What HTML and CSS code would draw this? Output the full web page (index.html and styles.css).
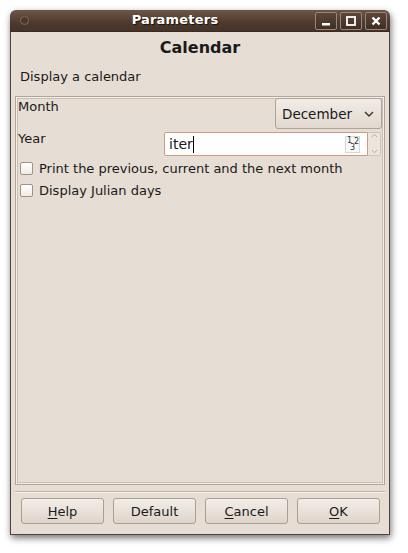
FILE: index.html
```html
<!DOCTYPE html>
<html>
<head>
<meta charset="utf-8">
<link rel="stylesheet" href="styles.css">
</head>
<body>
<div class="window">
  <div class="titlebar">
    <span class="dot"></span>
    <span class="title">Parameters</span>
    <div class="wbtns">
      <span class="wbtn"><svg width="12" height="12" viewBox="0 0 12 12"><rect x="2" y="8" width="8" height="2.5" fill="#fff"/></svg></span>
      <span class="wbtn"><svg width="12" height="12" viewBox="0 0 12 12"><rect x="2" y="2" width="8" height="8" fill="none" stroke="#fff" stroke-width="1.8"/></svg></span>
      <span class="wbtn"><svg width="12" height="12" viewBox="0 0 12 12"><path d="M2.5 2.5 L9.5 9.5 M9.5 2.5 L2.5 9.5" stroke="#fff" stroke-width="2.4"/></svg></span>
    </div>
  </div>
  <div class="body">
    <div class="heading">Calendar</div>
    <div class="desc">Display a calendar</div>
    <div class="frame">
      <div class="row">
        <span class="label">Month</span>
        <div class="combo"><span>December</span><svg width="12" height="8" viewBox="0 0 12 8"><path d="M2 2 L6 6 L10 2" fill="none" stroke="#3a3a3a" stroke-width="1.5"/></svg></div>
      </div>
      <div class="row">
        <span class="label year">Year</span>
        <div class="spin">
          <div class="entry"><span class="val">iter</span><span class="caret"></span><span class="numicon"><span class="n1">1</span><span class="n3">3</span><span class="n2">2</span></span></div>
          <div class="arrows">
            <svg width="9" height="12" viewBox="0 0 9 12"><path d="M1.5 4.5 L4.5 1.5 L7.5 4.5" fill="none" stroke="#a9a9a9" stroke-width="1"/></svg>
            <svg width="9" height="12" viewBox="0 0 9 12"><path d="M1.5 6.5 L4.5 9.5 L7.5 6.5" fill="none" stroke="#a9a9a9" stroke-width="1"/></svg>
          </div>
        </div>
      </div>
      <label class="check"><span class="box"></span>Print the previous, current and the next month</label>
      <label class="check"><span class="box"></span>Display Julian days</label>
    </div>
    <div class="sep"></div>
    <div class="buttons">
      <span class="btn"><u>H</u>elp</span>
      <span class="btn">Default</span>
      <span class="btn"><u>C</u>ancel</span>
      <span class="btn"><u>O</u>K</span>
    </div>
  </div>
</div>
</body>
</html>
```
FILE: styles.css
```css
html, body { margin: 0; padding: 0; background: #ffffff; }
body {
  font-family: "DejaVu Sans", "Liberation Sans", sans-serif;
  font-size: 13px;
  color: #1a1a1a;
  width: 408px;
  height: 553px;
  overflow: hidden;
}
.window {
  margin: 10px 0 0 10px;
  width: 380px;
  height: 525px;
  display: flex;
  flex-direction: column;
  border-radius: 6px 6px 2px 2px;
  box-shadow: 1px 3px 7px rgba(0,0,0,0.55);
  background: #e6ddd4;
}
.titlebar {
  height: 22px;
  flex: none;
  display: flex;
  align-items: center;
  position: relative;
  background: linear-gradient(#6e5648, #4e3a2d 60%, #45332a);
  border-radius: 6px 6px 0 0;
  border-bottom: 1px solid #3a2a20;
  box-sizing: border-box;
}
.dot {
  width: 7px; height: 7px;
  border-radius: 50%;
  border: 1px solid #806b5c;
  background: #4a382c;
  margin-left: 10px;
}
.title {
  position: absolute;
  left: 0; right: 50px;
  text-align: center;
  color: #fff;
  font-weight: bold;
  font-size: 13px;
  top: 2px;
  text-shadow: 1px 1px 1px #1c120c;
  letter-spacing: 0.2px;
}
.wbtns {
  margin-left: auto;
  margin-right: 3px;
  display: flex;
  gap: 3px;
}
.wbtn {
  width: 20px; height: 16px;
  border: 1px solid #9b8576;
  border-radius: 2px;
  background: linear-gradient(#5c4639, #3f2f25);
  display: flex; align-items: center; justify-content: center;
}
.body {
  flex: 1;
  display: flex;
  flex-direction: column;
  border: 1px solid #52433a;
  border-top: none;
  padding: 0 4px 10px;
}
.heading {
  text-align: center;
  font-weight: bold;
  font-size: 16px;
  line-height: 20px;
  padding-top: 6px;
}
.desc {
  line-height: 16px;
  margin-top: 11px;
  padding-left: 5px;
}
.frame {
  margin-top: 11px;
  flex: 1;
  border: 1px solid #b4a696;
  box-shadow: inset 0 0 0 1px #f3eee9, inset 0 0 0 2px #cabfb2;
  padding: 1px 2px 0 2px;
  display: flex;
  flex-direction: column;
}
.row {
  display: flex;
  justify-content: space-between;
  align-items: flex-start;
  margin-bottom: 3px;
}
.label { line-height: 16px; padding-top: 1px; }
.label.year { padding-top: 0; margin-top: -1px; }
.combo {
  height: 29px;
  border: 1px solid #b0a294;
  border-radius: 3px;
  background: linear-gradient(#f1ece7, #e2d9d0);
  display: flex; align-items: center; justify-content: space-between;
  padding: 0 6px 0 6px;
  width: 93px;
  font-size: 13.5px;
}
.spin { display: flex; margin-right: 1px; }
.entry {
  height: 22px;
  background: #fff;
  border: 1px solid #d09a7c;
  border-radius: 2px 0 0 2px;
  display: flex; align-items: center;
  padding-left: 4px;
  width: 198px;
  font-size: 14px;
}
.caret { width: 1px; height: 17px; background: #000; }
.numicon {
  margin-left: auto; margin-right: 7px;
  width: 13px; height: 15px;
  border: 1px solid #d8d8d8;
  background: #f8f8f8;
  position: relative;
  font-size: 8px;
  line-height: 8px;
  color: #333;
}
.n1 { position: absolute; left: 1px; top: 0; }
.n3 { position: absolute; left: 4px; top: 7px; }
.n2 { position: absolute; left: 8px; top: 1px; }
.arrows {
  width: 12px; height: 22px;
  border: 1px solid #cfc5bb;
  border-left: none;
  border-radius: 0 2px 2px 0;
  background: #ece5de;
  display: flex; flex-direction: column; align-items: center;
}
.arrows svg { height: 11px; }
.check {
  display: flex; align-items: center;
  height: 18px;
  margin-top: 4px;
  padding-left: 2px;
}
.row + .row + .check { margin-top: 0; }
.box {
  width: 11px; height: 11px;
  border: 1px solid #9f9386;
  border-radius: 2px;
  background: linear-gradient(#ffffff, #f0ebe6);
  margin-right: 6px;
}
.sep {
  margin-top: 6px;
  height: 1px;
  background: #c2b5a8;
  border-bottom: 1px solid #f5f0eb;
}
.buttons {
  margin-top: 5px;
  display: flex;
  justify-content: space-between;
  padding: 0 5px 0 6px;
}
.btn {
  width: 81px; height: 24px;
  border: 1px solid #ac9e90;
  border-radius: 3px;
  background: linear-gradient(#f2ede8, #e9e2db 50%, #ddd3c9);
  display: flex; align-items: center; justify-content: center;
}
.btn u { text-decoration-thickness: 1px; text-underline-offset: 2px; }
```
